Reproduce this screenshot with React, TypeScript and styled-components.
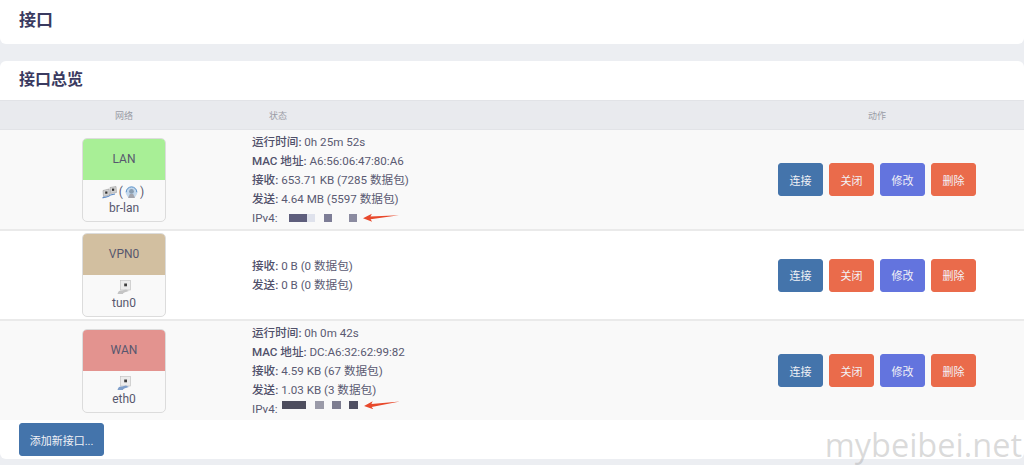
import React from 'react';
import styled, { createGlobalStyle } from 'styled-components';

const GlobalStyle = createGlobalStyle`
  html, body {
    margin: 0;
    padding: 0;
    background: #eceef2;
    overflow: hidden;
    font-family: Roboto, "Noto Sans CJK SC", sans-serif;
    color: #5a5a72;
  }
`;

const Page = styled.div`
  position: relative;
  width: 1024px;
  height: 465px;
  overflow: hidden;
`;

const HeaderCard = styled.header`
  height: 44px;
  background: #fff;
  border-radius: 0 0 6px 6px;
  margin-bottom: 17px;
  padding: 10px 0 0 19px;
  box-sizing: border-box;
`;

const PageTitle = styled.h1`
  margin: 0;
  font-size: 17px;
  line-height: 20px;
  font-weight: 700;
  color: #3a3a60;
`;

const Card = styled.section`
  height: 398px;
  background: #fff;
  border-radius: 6px;
`;

const CardTitle = styled.h2`
  margin: 0;
  height: 39px;
  padding: 9px 0 0 19px;
  box-sizing: border-box;
  font-size: 16px;
  line-height: 20px;
  font-weight: 700;
  color: #3a3a60;
`;

const columns = `
  display: grid;
  grid-template-columns: 248px 522px 214px;
`;

const HeadRow = styled.div`
  ${columns}
  height: 30px;
  align-items: center;
  background: #e9eaee;
  border-top: 1px solid #e2e3e7;
  border-bottom: 1px solid #e2e3e7;
  box-sizing: border-box;
  font-size: 9px;
  color: #9a9ca6;
`;

const HeadCell = styled.div<{ $inset?: number }>`
  text-align: ${p => (p.$inset ? 'left' : 'center')};
  padding-left: ${p => p.$inset ?? 0}px;
`;

const Row = styled.div<{ $odd?: boolean }>`
  ${columns}
  align-items: center;
  padding: 2px 0;
  background: ${p => (p.$odd ? '#f9f9f9' : '#fff')};
  border-bottom: 2px solid #eaeaea;

  &:last-of-type {
    border-bottom: 0;
  }
`;

const IfaceBox = styled.div`
  justify-self: center;
  width: 84px;
  height: 84px;
  box-sizing: border-box;
  border: 1px solid #dcdcdc;
  border-radius: 5px;
  background: #f9f9f9;
  overflow: hidden;
  text-align: center;
`;

const IfaceName = styled.div<{ $color: string }>`
  height: 41px;
  background: ${p => p.$color};
  font-size: 12px;
  line-height: 40px;
  color: #57576e;
`;

const IfaceIcons = styled.div`
  display: flex;
  justify-content: center;
  align-items: center;
  height: 15px;
  margin-top: 5px;
  font-size: 12px;
  line-height: 15px;
`;

const IfaceDevice = styled.div`
  margin-top: 1px;
  font-size: 12px;
  line-height: 15px;
  color: #57576e;
`;

const Status = styled.div`
  padding-left: 4px;
  font-size: 11.6px;
  color: #5a5a72;
`;

const StatusLine = styled.div`
  height: 19px;
  line-height: 21px;
  white-space: pre;
`;

const Label = styled.b`
  font-weight: 500;
  color: #50506a;
`;

const Mask = styled.span<{ $w: number; $gap: number; $shade: string; $up?: number }>`
  display: inline-block;
  width: ${p => p.$w}px;
  height: 8px;
  margin-left: ${p => p.$gap}px;
  background: ${p => p.$shade};
  position: relative;
  top: ${p => p.$up ?? 0}px;
  filter: blur(0.4px);
`;

const Actions = styled.div`
  display: flex;
  gap: 6px;
  padding-left: 8px;
`;

const Btn = styled.button<{ $color: string }>`
  width: 45px;
  height: 33px;
  padding: 0;
  border: 1px solid ${p => p.$color};
  border-radius: 3px;
  background: ${p => p.$color};
  color: #f2f2f6;
  font-family: inherit;
  font-size: 11px;
`;

const AddBtn = styled(Btn)`
  display: block;
  width: 85px;
  margin: 3px 0 0 19px;
`;

const Watermark = styled.div`
  position: absolute;
  right: 2px;
  top: 425px;
  font-family: "Open Sans", sans-serif;
  font-size: 32.5px;
  line-height: 40px;
  color: rgba(150, 150, 150, 0.35);
`;

const ArrowSvg = styled.svg<{ $shift: number }>`
  margin-left: 6px;
  transform: translateY(${p => p.$shift}px);
`;

const Arrow = ({ shift, tilt }: { shift: number; tilt: number }) => (
  <ArrowSvg $shift={shift} width="36" height="9" viewBox="0 0 36 9">
    <g transform={`rotate(${tilt} 18 4.5)`}>
      <path d="M0 4.5 L9 0.5 L7.5 3.2 L36 3 L7.5 6 L9 8.5 Z" fill="#e8492c" />
    </g>
  </ArrowSvg>
);

const PortIcon = ({ wire }: { wire: string }) => (
  <svg width="14" height="15" viewBox="0 0 14 15">
    <rect x="3.5" y="0.5" width="10" height="9.5" fill="#ececec" stroke="#bdbdbd" strokeWidth="0.6" />
    <rect x="7.2" y="3.5" width="2.8" height="2.8" fill="#3f3f3f" />
    <path d="M0.5 14 C1 11 3 10 5 10.5 L9 9.5 L12 11 C9 12 6 12.5 6 14 Z" fill={wire} />
  </svg>
);

const BridgeIcon = () => (
  <svg width="15" height="13" viewBox="0 0 15 13">
    <path d="M1 4.5 L7 3 L7.5 9 L1.5 10.5 Z" fill="#d2d2d2" stroke="#8d8d8d" strokeWidth="0.5" />
    <path d="M8 1.5 L14 0.5 L14.5 6.5 L8.5 7.5 Z" fill="#d2d2d2" stroke="#8d8d8d" strokeWidth="0.5" />
    <rect x="3.2" y="5.5" width="2.2" height="2.2" fill="#2f2f2f" />
    <rect x="10" y="2.6" width="2.2" height="2.2" fill="#2f2f2f" />
    <path d="M0.5 12 C3 10.5 6 12 8.5 9 L13 8" stroke="#5c8ac6" strokeWidth="1.1" fill="none" />
  </svg>
);

const WifiIcon = () => (
  <svg width="13" height="13" viewBox="0 0 13 13">
    <circle cx="6.5" cy="6.2" r="5.8" fill="#c3d8ec" />
    <path d="M1.2 6.2 A5.3 5.3 0 0 1 11.8 6.2" stroke="#5f93c9" strokeWidth="1" fill="none" />
    <circle cx="6.5" cy="5.4" r="2.4" fill="#8a9db0" />
    <path d="M3 12 L10 12 L8.2 8 L4.8 8 Z" fill="#a2a4ac" />
  </svg>
);

const Paren = styled.span`
  margin: 0 2px;
`;

type Stat = { label: string; value: string };

const Masks = ({ items }: { items: [number, number, string, number?][] }) => (
  <>
    {items.map(([w, gap, shade, up], i) => (
      <Mask key={i} $w={w} $gap={gap} $shade={shade} $up={up} />
    ))}
  </>
);

const lanStats: Stat[] = [
  { label: '运行时间', value: '0h 25m 52s' },
  { label: 'MAC 地址', value: 'A6:56:06:47:80:A6' },
  { label: '接收', value: '653.71 KB (7285 数据包)' },
  { label: '发送', value: '4.64 MB (5597 数据包)' },
];

const vpnStats: Stat[] = [
  { label: '接收', value: '0 B (0 数据包)' },
  { label: '发送', value: '0 B (0 数据包)' },
];

const wanStats: Stat[] = [
  { label: '运行时间', value: '0h 0m 42s' },
  { label: 'MAC 地址', value: 'DC:A6:32:62:99:82' },
  { label: '接收', value: '4.59 KB (67 数据包)' },
  { label: '发送', value: '1.03 KB (3 数据包)' },
];

const StatList = ({ stats }: { stats: Stat[] }) => (
  <>
    {stats.map(s => (
      <StatusLine key={s.label}>
        <Label>{s.label}:</Label> {s.value}
      </StatusLine>
    ))}
  </>
);

const ActionButtons = () => (
  <Actions>
    <Btn $color="#4474ab">连接</Btn>
    <Btn $color="#ea6b4b">关闭</Btn>
    <Btn $color="#6374de">修改</Btn>
    <Btn $color="#ea6b4b">删除</Btn>
  </Actions>
);

export default function App() {
  return (
    <Page>
      <GlobalStyle />
      <HeaderCard>
        <PageTitle>接口</PageTitle>
      </HeaderCard>
      <Card>
        <CardTitle>接口总览</CardTitle>
        <HeadRow>
          <HeadCell>网络</HeadCell>
          <HeadCell $inset={21}>状态</HeadCell>
          <HeadCell>动作</HeadCell>
        </HeadRow>

        <Row $odd>
          <IfaceBox>
            <IfaceName $color="#a8ef96">LAN</IfaceName>
            <IfaceIcons>
              <BridgeIcon />
              <Paren>(</Paren>
              <WifiIcon />
              <Paren>)</Paren>
            </IfaceIcons>
            <IfaceDevice>br-lan</IfaceDevice>
          </IfaceBox>
          <Status>
            <StatList stats={lanStats} />
            <StatusLine>
              IPv4:
              <Masks items={[[18, 11, '#5e5e7c'], [8, 0, '#dfe2ec'], [8, 9, '#7d7d96'], [8, 17, '#8b8ba0']]} />
              <Arrow shift={0} tilt={-2} />
            </StatusLine>
          </Status>
          <ActionButtons />
        </Row>

        <Row>
          <IfaceBox>
            <IfaceName $color="#d2bfa0">VPN0</IfaceName>
            <IfaceIcons>
              <PortIcon wire="#c4c4c4" />
            </IfaceIcons>
            <IfaceDevice>tun0</IfaceDevice>
          </IfaceBox>
          <Status>
            <StatList stats={vpnStats} />
          </Status>
          <ActionButtons />
        </Row>

        <Row $odd>
          <IfaceBox>
            <IfaceName $color="#e3938f">WAN</IfaceName>
            <IfaceIcons>
              <PortIcon wire="#7f9fca" />
            </IfaceIcons>
            <IfaceDevice>eth0</IfaceDevice>
          </IfaceBox>
          <Status>
            <StatList stats={wanStats} />
            <StatusLine>
              IPv4:
              <Masks items={[[24, 4, '#4e4e5e', -4], [9, 9, '#9a9aa8', -4], [9, 8, '#7d7d90', -4], [9, 8, '#4f4f62', -4]]} />
              <Arrow shift={-4} tilt={-5} />
            </StatusLine>
          </Status>
          <ActionButtons />
        </Row>

        <AddBtn $color="#4474ab">添加新接口...</AddBtn>
      </Card>
      <Watermark>mybeibei.net</Watermark>
    </Page>
  );
}
